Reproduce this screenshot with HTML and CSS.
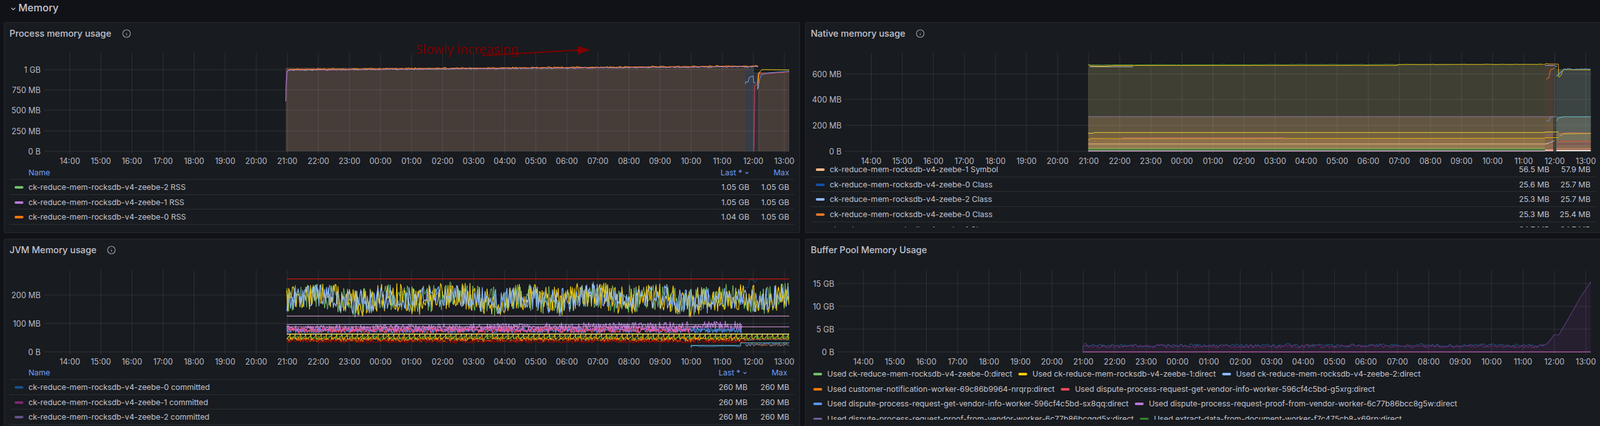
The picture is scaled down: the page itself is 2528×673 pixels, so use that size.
FILE: index.html
```html
<!DOCTYPE html>
<html lang="en">
<head>
<meta charset="utf-8">
<title>Memory</title>
<link rel="stylesheet" href="styles.css">
<script src="script.js" defer></script>
</head>
<body>
<header class="row-title">
  <svg class="chevron" viewBox="0 0 10 10"><path d="M2 3.5 5 6.5 8 3.5"/></svg>
  <span>Memory</span>
</header>
<main class="dashboard">

  <section class="panel">
    <div class="panel-head">
      <h2>Process memory usage</h2>
      <svg class="info" viewBox="0 0 14 14"><circle cx="7" cy="7" r="6"/><path d="M7 6.5v3.2M7 4.2v.6"/></svg>
    </div>
    <svg class="chart chart-a" data-chart="process"></svg>
    <div class="table table-a">
      <div class="row row-head"><span class="name">Name</span><span class="num">Last * <svg class="sort" viewBox="0 0 10 10"><path d="M2 3.5 5 6.5 8 3.5"/></svg></span><span class="num">Max</span></div>
      <div class="row"><span class="name"><i class="swatch c-green"></i>ck-reduce-mem-rocksdb-v4-zeebe-2 RSS</span><span class="num">1.05 GB</span><span class="num">1.05 GB</span></div>
      <div class="row"><span class="name"><i class="swatch c-purple"></i>ck-reduce-mem-rocksdb-v4-zeebe-1 RSS</span><span class="num">1.05 GB</span><span class="num">1.05 GB</span></div>
      <div class="row"><span class="name"><i class="swatch c-orange"></i>ck-reduce-mem-rocksdb-v4-zeebe-0 RSS</span><span class="num">1.04 GB</span><span class="num">1.05 GB</span></div>
    </div>
  </section>

  <section class="panel">
    <div class="panel-head">
      <h2>Native memory usage</h2>
      <svg class="info" viewBox="0 0 14 14"><circle cx="7" cy="7" r="6"/><path d="M7 6.5v3.2M7 4.2v.6"/></svg>
    </div>
    <svg class="chart chart-b" data-chart="native"></svg>
    <div class="table table-b">
      <div class="scrolled">
        <div class="row"><span class="name"><i class="swatch c-peach"></i>ck-reduce-mem-rocksdb-v4-zeebe-1 Symbol</span><span class="num">56.5 MB</span><span class="num">57.9 MB</span></div>
        <div class="row"><span class="name"><i class="swatch c-navy"></i>ck-reduce-mem-rocksdb-v4-zeebe-0 Class</span><span class="num">25.6 MB</span><span class="num">25.7 MB</span></div>
        <div class="row"><span class="name"><i class="swatch c-sky"></i>ck-reduce-mem-rocksdb-v4-zeebe-2 Class</span><span class="num">25.3 MB</span><span class="num">25.7 MB</span></div>
        <div class="row"><span class="name"><i class="swatch c-rust"></i>ck-reduce-mem-rocksdb-v4-zeebe-0 Class</span><span class="num">25.3 MB</span><span class="num">25.4 MB</span></div>
        <div class="row"><span class="name"><i class="swatch c-none"></i>ck-reduce-mem-rocksdb-v4-zeebe-1 Class</span><span class="num">24.7 MB</span><span class="num">24.7 MB</span></div>
      </div>
    </div>
  </section>

  <section class="panel">
    <div class="panel-head">
      <h2>JVM Memory usage</h2>
      <svg class="info" viewBox="0 0 14 14"><circle cx="7" cy="7" r="6"/><path d="M7 6.5v3.2M7 4.2v.6"/></svg>
    </div>
    <svg class="chart chart-c" data-chart="jvm"></svg>
    <div class="table table-c">
      <div class="row row-head"><span class="name">Name</span><span class="num">Last * <svg class="sort" viewBox="0 0 10 10"><path d="M2 3.5 5 6.5 8 3.5"/></svg></span><span class="num num-max">Max</span></div>
      <div class="row"><span class="name"><i class="swatch c-navy2"></i>ck-reduce-mem-rocksdb-v4-zeebe-0 committed</span><span class="num">260 MB</span><span class="num">260 MB</span></div>
      <div class="row"><span class="name"><i class="swatch c-plum"></i>ck-reduce-mem-rocksdb-v4-zeebe-1 committed</span><span class="num">260 MB</span><span class="num">260 MB</span></div>
      <div class="row"><span class="name"><i class="swatch c-violet"></i>ck-reduce-mem-rocksdb-v4-zeebe-2 committed</span><span class="num">260 MB</span><span class="num">260 MB</span></div>
    </div>
  </section>

  <section class="panel">
    <div class="panel-head">
      <h2>Buffer Pool Memory Usage</h2>
    </div>
    <svg class="chart chart-d" data-chart="buffer"></svg>
    <div class="legend">
      <div class="legend-row">
        <span class="item"><i class="swatch c-green"></i>Used ck-reduce-mem-rocksdb-v4-zeebe-0:direct</span>
        <span class="item"><i class="swatch c-yellow"></i>Used ck-reduce-mem-rocksdb-v4-zeebe-1:direct</span>
        <span class="item"><i class="swatch c-sky"></i>Used ck-reduce-mem-rocksdb-v4-zeebe-2:direct</span>
      </div>
      <div class="legend-row">
        <span class="item"><i class="swatch c-orange"></i>Used customer-notification-worker-69c86b9964-nrqrp:direct</span>
        <span class="item"><i class="swatch c-red"></i>Used dispute-process-request-get-vendor-info-worker-596cf4c5bd-g5xrg:direct</span>
      </div>
      <div class="legend-row">
        <span class="item"><i class="swatch c-blue"></i>Used dispute-process-request-get-vendor-info-worker-596cf4c5bd-sx8qq:direct</span>
        <span class="item"><i class="swatch c-purple"></i>Used dispute-process-request-proof-from-vendor-worker-6c77b86bcc8g5w:direct</span>
      </div>
      <div class="legend-row">
        <span class="item"><i class="swatch c-violet2"></i>Used dispute-process-request-proof-from-vendor-worker-6c77b86bcqqd5x:direct</span>
        <span class="item"><i class="swatch c-forest"></i>Used extract-data-from-document-worker-f7c475cb8-x69rp:direct</span>
      </div>
    </div>
  </section>

</main>
</body>
</html>
```
FILE: styles.css
```css
* { box-sizing: border-box; }
html, body { margin: 0; height: 673px; overflow: hidden; }
body {
  width: 2528px;
  background: #111217;
  color: #c4c4d0;
  font-family: Inter, "Noto Sans", sans-serif;
  font-size: 12.3px;
}
.row-title {
  height: 35px;
  padding: 2px 0 0 16px;
  display: flex;
  align-items: flex-start;
  gap: 3px;
  font-size: 16px;
  font-weight: 500;
  line-height: 20px;
  color: #c6c6d2;
}
.chevron { width: 10px; height: 10px; margin-top: 7px; fill: none; stroke: #c6c6d2; stroke-width: 1.2; }
.dashboard {
  display: grid;
  grid-template-columns: 1258px 1258px;
  grid-template-rows: 333px 298px;
  column-gap: 8px;
  row-gap: 9px;
  padding-left: 6px;
}
.panel {
  background: #181b1f;
  border: 1px solid #26292e;
  border-radius: 2px;
  display: flex;
  flex-direction: column;
  overflow: hidden;
  min-height: 0;
}
.panel-head {
  flex: none;
  height: 33px;
  padding-left: 8px;
  display: flex;
  align-items: center;
  gap: 17px;
}
.panel-head h2 { margin: 0; font-size: 14.3px; font-weight: 500; color: #c2c2ce; }
.info { width: 14px; height: 14px; fill: none; stroke: #9b9ba6; stroke-width: 1.2; }
.chart { display: block; flex: none; width: 100%; }
.chart-a { height: 193px; }
.chart-b { height: 191px; }
.chart-c { height: 167px; }
.chart-d { height: 168px; }
.chart text { font-family: Inter, sans-serif; font-size: 12.4px; fill: #b9b9c5; }
.chart .note { font-family: "Noto Sans", sans-serif; font-size: 20.2px; fill: #7a0000; }
.table { flex: none; margin: 0 8px; overflow: hidden; }
.table-b { height: 99px; }
.scrolled { margin-top: -4px; }
.row {
  display: grid;
  align-items: center;
  height: 23.7px;
  padding-right: 8px;
  border-bottom: 1px solid #2b2e33;
}
.table-a .row { grid-template-columns: 1fr 80px 63px; }
.table-b .row { grid-template-columns: 1fr 80px 65px; }
.table-c .row { grid-template-columns: 1fr 80px 66px; }
.row-head { height: 22px; color: #6e9fff; }
.row-head .name { padding-left: 30px; }
.row-head .num-max { padding-right: 3px; }
.name { display: flex; align-items: center; white-space: nowrap; }
.num { text-align: right; white-space: nowrap; }
.sort { width: 8px; height: 8px; fill: none; stroke: #6e9fff; stroke-width: 1.4; }
.swatch {
  flex: none;
  width: 14px;
  height: 4px;
  margin: 1px 8px 0 8px;
  border-radius: 2px;
}
.legend { flex: none; height: 84px; padding: 0 0 0 12px; overflow: hidden; }
.legend-row { display: flex; align-items: center; gap: 10px; height: 23.5px; }
.item { display: flex; align-items: center; white-space: nowrap; }
.item .swatch { margin-left: 0; }
.c-green { background: #73bf69; }
.c-purple { background: #b877d9; }
.c-orange { background: #ff780a; }
.c-peach { background: #ffb98c; }
.c-navy { background: #1250a8; }
.c-sky { background: #8ab8ff; }
.c-rust { background: #e0752d; }
.c-none { background: #181b1f; }
.c-navy2 { background: #15508f; }
.c-plum { background: #7e2671; }
.c-violet { background: #64508a; }
.c-yellow { background: #f2cc0c; }
.c-red { background: #f2495c; }
.c-blue { background: #5794f2; }
.c-violet2 { background: #705da0; }
.c-forest { background: #37872d; }
```
FILE: script.js
```js
var NS = 'http://www.w3.org/2000/svg';
var seed = 12345;
function rnd() { seed = (seed * 16807) % 2147483647; return seed / 2147483647; }
function r(a, b) { return a + (b - a) * rnd(); }

function make(svg, tag, attrs, text) {
  var el = document.createElementNS(NS, tag);
  for (var k in attrs) el.setAttribute(k, attrs[k]);
  if (text) el.textContent = text;
  svg.appendChild(el);
  return el;
}
function line(svg, pts, color, w, op) {
  make(svg, 'polyline', {
    points: pts.map(function (p) { return p[0].toFixed(1) + ',' + p[1].toFixed(1); }).join(' '),
    fill: 'none', stroke: color, 'stroke-width': w || 1, opacity: op || 1, 'stroke-linejoin': 'round'
  });
}
function rect(svg, x0, y0, x1, y1, color) {
  make(svg, 'rect', { x: x0, y: y0, width: x1 - x0, height: y1 - y0, fill: color });
}
function noise(svg, x0, x1, step, lo, hi, color, w) {
  var pts = [];
  for (var x = x0; x < x1; x += step) {
    var a = typeof lo === 'function' ? lo(x) : lo;
    var b = typeof hi === 'function' ? hi(x) : hi;
    pts.push([x, r(a, b)]);
  }
  line(svg, pts, color, w || 1);
}
function drift(svg, x0, x1, step, y0, y1, amp, color, w) {
  var pts = [];
  for (var x = x0; x < x1; x += step) {
    var t = (x - x0) / (x1 - x0);
    var j = rnd() < 0.5 ? r(-amp, amp) : 0;
    pts.push([x, y0 + (y1 - y0) * t + j]);
  }
  line(svg, pts, color, w || 1);
}
function axes(svg, o) {
  var grid = 'rgba(204,204,220,0.13)';
  o.ys.forEach(function (t) {
    line(svg, [[o.left, t[1]], [o.right, t[1]]], grid);
    make(svg, 'text', { x: o.left - 5.5, y: t[1] + 4.5, 'text-anchor': 'end' }, t[0]);
  });
  for (var i = 0; i < 24; i++) {
    var x = o.x14 + i * o.step;
    line(svg, [[x, o.top], [x, o.bottom + 4]], grid);
    make(svg, 'text', { x: x, y: o.bottom + 19.5, 'text-anchor': 'middle' },
      String((14 + i) % 24).padStart(2, '0') + ':00');
  }
}

var charts = {
  process: function (s) {
    rect(s, 451.5, 107, 1178, 239, '#463c38');
    rect(s, 1178, 107, 1191, 239, '#373c46');
    rect(s, 1191, 114, 1198, 239, '#2e3038');
    rect(s, 1198, 114, 1200, 239, '#4f4442');
    rect(s, 1200, 114, 1247, 239, '#463c38');
    axes(s, { left: 69.5, right: 1247, top: 84, bottom: 239, x14: 110.4, step: 49.08,
      ys: [['1 GB', 110], ['750 MB', 142], ['500 MB', 174], ['250 MB', 207], ['0 B', 239]] });
    line(s, [[451.5, 160], [452, 135], [453.5, 113], [456, 110.8]], '#b877d9', 1.2);
    drift(s, 456, 1199, 2, 110.6, 105, 1.1, '#73bf69', 1);
    drift(s, 456, 1199, 2, 109.6, 104.3, 1.3, '#ff780a', 1.2);
    drift(s, 456, 1199, 2, 110.8, 105.2, 1.3, '#b877d9', 1);
    line(s, [[1178, 133], [1178, 129.5], [1182, 129.5], [1184, 122], [1190, 120], [1191, 131], [1194, 131]], '#7aa7e8', 1);
    line(s, [[1191, 239], [1192.5, 135], [1196, 134], [1198, 116], [1215, 116], [1247, 113.5]], '#f2495c', 1);
    line(s, [[1197, 141], [1199, 115], [1204, 110], [1247, 110.5]], '#f2cc0c', 1);
    line(s, [[1198, 139], [1200, 126], [1203, 118], [1215, 115], [1247, 112.5]], '#5794f2', 1);
    line(s, [[1197, 141], [1198, 118], [1202, 114]], '#ff780a', 1);
    make(s, 'text', { class: 'note', x: 657, y: 85 }, 'Slowly increasing');
    line(s, [[762.4, 87.7], [915, 79]], '#7f0000', 2);
    make(s, 'polygon', { points: '912.6,72.7 933,78.7 912.6,85.7', fill: '#7f0000' });
  },
  native: function (s) {
    var bands = [[103, 184, '#3f4033'], [184, 209, '#625640'], [209, 218.7, '#73603f'],
      [218.7, 227, '#8c6f49'], [227, 234, '#94774f'], [234, 239, '#6f8050']];
    bands.forEach(function (b) { rect(s, 1719.4, b[0], 2441, b[1], b[2]); });
    var mid = [[103, 184, '#4a3d33'], [184, 209, '#69583f'], [209, 227, '#7f6347'], [227, 236, '#8f6a50'], [236, 239, '#e2a8a0']];
    mid.forEach(function (b) { rect(s, 2441, b[0], 2454, b[1], b[2]); });
    rect(s, 2454, 105, 2459, 239, '#3a3d3a');
    var right = [[109, 184, '#3c4343'], [184, 210, '#59615a'], [210, 223, '#74705a'],
      [223, 234, '#836a54'], [234, 237, '#a0705e'], [237, 239, '#e4e2d6']];
    right.forEach(function (b) { rect(s, 2459, b[0], 2513.5, b[1], b[2]); });
    axes(s, { left: 1335, right: 2513.5, top: 84, bottom: 239, x14: 1376.5, step: 49.09,
      ys: [['600 MB', 117], ['400 MB', 157], ['200 MB', 198], ['0 B', 239]] });
    drift(s, 1720, 2440, 3, 102.6, 101.6, 0.7, '#4f9a3f', 1);
    line(s, [[1720, 101], [1722, 104], [1745, 104.6], [1760, 103.5], [2208, 103.3], [2208, 102], [2440, 101.8], [2443, 100.3], [2447, 101], [2462, 101.3], [2463, 122], [2466, 120], [2470, 110], [2513, 110.5]], '#e8ad12', 1);
    line(s, [[1722, 105.5], [1790, 105.5]], '#b9b9a8', 1);
    line(s, [[2441, 103], [2455, 103.3], [2460, 105]], '#c8b8d8', 1);
    line(s, [[2443, 125], [2447, 123], [2450, 110], [2456, 108]], '#e0752d', 1);
    drift(s, 2459, 2470, 1.5, 121, 111, 2, '#5fb0dc', 1.2);
    drift(s, 2470, 2513.5, 1.7, 109, 109, 1.5, '#5fb0dc', 1);
    line(s, [[1719.4, 184.3], [2460, 184.3]], '#8a739c', 1);
    line(s, [[2459, 191], [2463, 186], [2470, 184.4], [2513.5, 184.4]], '#66c0c8', 1);
    line(s, [[2443, 191], [2448, 190.5], [2450, 185], [2456, 184.5]], '#6f88c0', 1);
    line(s, [[1719.4, 210.5], [1727, 210.5], [1730, 209.3], [2441, 209.3], [2441, 208.5], [2463, 208.5]], '#e3cf35', 1);
    line(s, [[2459, 214], [2465, 211], [2477, 209.5], [2513.5, 210.3]], '#d96a56', 1);
    line(s, [[2464, 215], [2470, 211.5], [2513.5, 210.8]], '#d9b93a', 1);
    line(s, [[2443, 215], [2450, 212], [2456, 211]], '#7a5f88', 1);
    line(s, [[1719.4, 221], [1723, 218.7], [1770, 219], [2441, 218.3], [2441, 217.5], [2463, 217.5]], '#e8ad12', 1);
    line(s, [[1773, 218], [2030, 218]], '#d87a80', 1);
    line(s, [[1719.4, 227.3], [2445, 227.3]], '#e2bb85', 1);
    line(s, [[2443, 227], [2450, 225], [2456, 222]], '#cfc0d8', 1);
    line(s, [[2459, 228], [2465, 223], [2513.5, 223]], '#d9533f', 1);
    line(s, [[2459, 227.5], [2513.5, 227.3]], '#7a3f62', 1);
    line(s, [[1719.4, 234.4], [2441, 234.4]], '#8fae5e', 1);
    line(s, [[1719.4, 236.6], [2441, 236.6]], '#3f7a3a', 1.6);
    line(s, [[1719.4, 238.6], [2441, 238.6]], '#e0b0d8', 1.2);
    line(s, [[2459, 234.5], [2513.5, 234.5]], '#c9805f', 1);
  },
  jvm: function (s) {
    axes(s, { left: 69.5, right: 1247, top: 427, bottom: 556, x14: 110.4, step: 49.08,
      ys: [['200 MB', 466], ['100 MB', 511], ['0 B', 556]] });
    function wave(x) { return 5 * Math.sin(x / 17) + 3 * Math.sin(x / 41); }
    var lo = function (x) { return 449 + wave(x) * 0.6; };
    var hi = function (x) { return 494 + wave(x); };
    noise(s, 453, 1247, 1.5, lo, hi, '#73bf69');
    noise(s, 453, 1247, 1.5, lo, hi, '#f2cc0c', 1.2);
    noise(s, 453, 1247, 1.5, function (x) { return 452 + wave(x) * 0.6; }, function (x) { return 491 + wave(x); }, '#8ab8ff', 1.2);
    line(s, [[453, 440.7], [1247, 440.7]], '#c4160f', 1.2);
    line(s, [[453, 499.3], [1247, 499.3]], '#e8a8e0', 1);
    noise(s, 453, 1172, 1.3, function (x) { return 514 - (x - 453) / 719 * 7; }, 524, '#b877d9', 1.2);
    noise(s, 453, 1172, 1.3, 518, 526, '#5794f2', 1.2);
    noise(s, 453, 1090, 1.3, 517, 526, '#f2495c', 1.2);
    noise(s, 453, 1100, 1.3, 516, 524, '#d868c8', 1.2);
    noise(s, 1090, 1172, 1.3, 518, 525.5, '#3f75b0', 1.2);
    line(s, [[453, 512.7], [1172, 512.7]], '#c0b0e8', 1);
    line(s, [[453, 516.3], [1247, 516.3]], '#e6a0e0', 1);
    noise(s, 453, 1247, 1.4, 530, 538, '#37872d', 1.2);
    noise(s, 453, 1178, 1.2, 533, 540, '#ff780a', 1.2);
    noise(s, 453, 1178, 1.1, 536.5, 542, '#8a0c08', 1.3);
    var saw = [];
    for (var x = 453; x < 1247; x += 8.2) {
      saw.push([x, 535], [x + 5, 530], [x + 5.3, 527.5], [x + 5.6, 535]);
    }
    line(s, saw, '#f2cc0c', 1);
    line(s, [[453, 527.7], [1247, 527.7]], '#f1e36a', 1.4);
    noise(s, 1092, 1172, 1.2, 546, 548, '#3f8fd8');
    line(s, [[1092, 549], [1092, 545.7], [1170, 545.7], [1170, 541.7], [1247, 541.7]], '#6cc0d2', 1);
    noise(s, 1178, 1247, 1.3, 542, 547, '#c96020');
    noise(s, 1178, 1247, 1.8, 542, 547, '#4f88d0');
    line(s, [[1176, 537], [1191, 537], [1191, 536], [1247, 536]], '#e05a50', 1);
    line(s, [[1176, 454.5], [1182, 454.5], [1184, 442], [1190, 442], [1193, 446], [1197, 441]], '#154a80', 1);
  },
  buffer: function (s) {
    var fill = [[1711, 556], [1711, 546]];
    for (var x = 1715; x < 2440; x += 14) fill.push([x, 546]);
    fill.push([2440, 545], [2455, 529], [2463, 529], [2513.5, 445], [2513.5, 556]);
    make(s, 'polygon', { points: fill.map(function (p) { return p.join(','); }).join(' '), fill: '#251f30' });
    axes(s, { left: 1323.5, right: 2513.5, top: 427, bottom: 556, x14: 1364.3, step: 49.62,
      ys: [['15 GB', 448], ['10 GB', 484], ['5 GB', 520], ['0 B', 556]] });
    noise(s, 1713, 2440, 2.2, 543, 548.5, '#1f60a0');
    noise(s, 1713, 2440, 2.2, 544.5, 550, '#7e2671');
    line(s, [[1711, 556], [1711, 546], [1715, 541.5], [1717, 545]], '#5d3d7a', 1);
    line(s, [[2438, 546], [2445, 543], [2452, 534], [2455, 529], [2463, 529], [2480, 500], [2497, 470], [2513.5, 445]], '#5d3d7a', 1.2);
    line(s, [[1711, 556], [2513.5, 556]], '#e468c8', 1.1);
  }
};

document.querySelectorAll('.chart').forEach(function (svg) {
  var b = svg.getBoundingClientRect();
  svg.setAttribute('viewBox', b.left + ' ' + b.top + ' ' + b.width + ' ' + b.height);
  charts[svg.dataset.chart](svg);
});
```
